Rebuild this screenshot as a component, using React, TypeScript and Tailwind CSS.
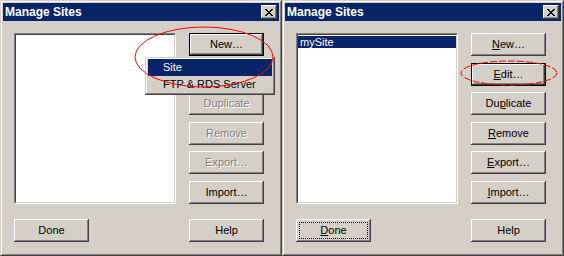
import React from "react";

const FONT = "font-['Liberation_Sans',Arial,sans-serif]";

const RAISED =
  "shadow-[inset_-1px_-1px_#404040,inset_1px_1px_#ffffff,inset_-2px_-2px_#808080,inset_2px_2px_#d4d0c8]";

interface BtnProps {
  label: string;
  mnemonic?: number;
  disabled?: boolean;
  isDefault?: boolean;
  focused?: boolean;
}

const Btn: React.FC<BtnProps> = ({ label, mnemonic, disabled, isDefault, focused }) => {
  const text =
    mnemonic === undefined ? (
      label
    ) : (
      <>
        {label.slice(0, mnemonic)}
        <span className="underline underline-offset-[1px]">{label[mnemonic]}</span>
        {label.slice(mnemonic + 1)}
      </>
    );

  return (
    <div
      className={`w-[75px] h-[23px] bg-[#d4d0c8] ${isDefault ? "border border-black" : ""}`}
    >
      <div className={`w-full h-full ${RAISED} p-[3px]`}>
        <div
          className={`w-full h-full flex items-center justify-center text-[11px] leading-none ${
            focused ? "border border-dotted border-black" : ""
          } ${disabled ? "text-[#808080] [text-shadow:1px_1px_0_#ffffff]" : "text-black"}`}
        >
          <span>{text}</span>
        </div>
      </div>
    </div>
  );
};

const TitleBar: React.FC = () => (
  <div className="h-[18px] bg-[#0a246a] flex items-center justify-between pl-[2px] pr-[2px]">
    <span className="text-white font-bold text-[12px] leading-none">Manage Sites</span>
    <div className={`w-[16px] h-[14px] bg-[#d4d0c8] ${RAISED} flex items-center justify-center`}>
      <svg width="8" height="7" viewBox="0 0 8 7" shapeRendering="crispEdges">
        <path d="M0 0h2v1h-2zM6 0h2v1h-2zM1 1h2v1h-2zM5 1h2v1h-2zM2 2h4v1h-4zM3 3h2v1h-2zM2 4h4v1h-4zM1 5h2v1h-2zM5 5h2v1h-2zM0 6h2v1h-2zM6 6h2v1h-2z" fill="#000" />
      </svg>
    </div>
  </div>
);

interface DialogProps {
  right?: boolean;
}

const Dialog: React.FC<DialogProps> = ({ right }) => {
  const buttons: BtnProps[] = right
    ? [
        { label: "New…", mnemonic: 0 },
        { label: "Edit…", mnemonic: 0, isDefault: true },
        { label: "Duplicate", mnemonic: 2 },
        { label: "Remove", mnemonic: 0 },
        { label: "Export…", mnemonic: 0 },
        { label: "Import…", mnemonic: 0 },
      ]
    : [
        { label: "New…", isDefault: true },
        { label: "Edit…", disabled: true },
        { label: "Duplicate", disabled: true },
        { label: "Remove", disabled: true },
        { label: "Export…", disabled: true },
        { label: "Import…" },
      ];

  return (
    <div className="relative w-[282px] h-[256px] bg-[#d4d0c8] border border-t-[#d4d0c8] border-l-[#d4d0c8] border-r-[#404040] border-b-[#404040]">
      <div className="w-full h-full border border-t-white border-l-white border-r-[#808080] border-b-[#808080] p-px">
        <TitleBar />
        <div className="pl-[11px] pt-[12px]">
          <div className="w-[250px]">
            <div className="flex">
              <div className="w-[162px] h-[171px] border border-t-[#808080] border-l-[#808080] border-r-white border-b-white">
                <div className="w-full h-full bg-white border border-t-[#404040] border-l-[#404040] border-r-[#d4d0c8] border-b-[#d4d0c8] pt-px">
                  {right && (
                    <div className="h-[12px] bg-[#0a246a] text-white text-[11px] leading-[12px] pl-[2px]">
                      mySite
                    </div>
                  )}
                </div>
              </div>
              <div className="ml-[13px] h-[171px] flex flex-col justify-between">
                {buttons.map((b) => (
                  <Btn key={b.label} {...b} />
                ))}
              </div>
            </div>
            <div className="mt-[15px] flex justify-between">
              <Btn label="Done" mnemonic={right ? 0 : undefined} focused={right} />
              <Btn label="Help" />
            </div>
          </div>
        </div>
      </div>

      {!right && (
        <div
          className={`absolute left-[144px] top-[56px] w-[130px] h-[38px] bg-[#d4d0c8] shadow-[inset_-1px_-1px_#404040,inset_1px_1px_#d4d0c8,inset_-2px_-2px_#808080,inset_2px_2px_#ffffff] px-[3px] py-[2px]`}
        >
          <div className="h-[17px] bg-[#0a246a] text-white text-[11px] flex items-center pl-[15px]">Site</div>
          <div className="h-[17px] text-black text-[11px] flex items-center pl-[15px]">FTP &amp; RDS Server</div>
        </div>
      )}
    </div>
  );
};

const App: React.FC = () => {
  return (
    <div className={`relative w-[564px] h-[256px] flex overflow-hidden ${FONT}`}>
      <Dialog />
      <Dialog right />
      <svg className="absolute inset-0 pointer-events-none" width="564" height="256">
        <ellipse cx="204" cy="57" rx="69" ry="30" fill="none" stroke="#ff0000" strokeWidth="1" />
        <ellipse cx="509" cy="73" rx="48" ry="12" fill="none" stroke="#ff0000" strokeWidth="1" strokeDasharray="7 2" />
      </svg>
    </div>
  );
};

export default App;
